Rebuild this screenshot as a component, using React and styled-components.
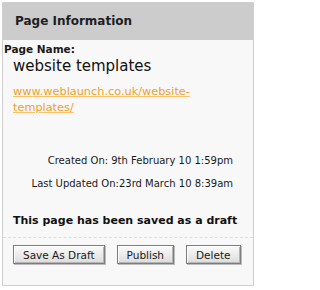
import React from 'react';
import styled, { createGlobalStyle } from 'styled-components';

/* Global */

const GlobalStyle = createGlobalStyle`
  body {
    margin: 0;
    background: #ffffff;
    font-family: "DejaVu Sans", Verdana, sans-serif;
    color: #1a1a1a;
  }
`;

/* Styled Components */

const Panel = styled.div`
  width: 250px;
  margin: 2px 0 0 2px;
  border: 1px solid #cfcfcf;
  background: #f8f8f8;
  padding-bottom: 21px;
`;

const Header = styled.h2`
  margin: 0;
  height: 37px;
  line-height: 37px;
  padding-left: 12px;
  background: #cccccc;
  font-size: 12px;
  font-weight: bold;
  color: #1e1e1e;
`;

const Label = styled.div`
  margin-top: 3px;
  padding-left: 1px;
  font-size: 10.5px;
  font-weight: bold;
  line-height: 13px;
`;

const PageName = styled.div`
  padding-left: 10px;
  font-size: 15px;
  line-height: 20px;
  color: #111;
`;

const Link = styled.a`
  display: block;
  margin: 8px 16px 0 10px;
  font-size: 11.3px;
  line-height: 16px;
  color: #f59e1b;
  text-decoration: underline;
  text-decoration-color: #f8c26a;
`;

const Meta = styled.div`
  margin-top: ${(p) => p.gap || 0}px;
  padding-right: 20px;
  text-align: right;
  font-size: 10px;
  line-height: 23px;
  color: #1a1a1a;
`;

const Status = styled.p`
  margin: 19px 0 0;
  padding-left: 10px;
  font-size: 11px;
  font-weight: bold;
  line-height: 14px;
  color: #111;
`;

const Divider = styled.hr`
  margin: 9px 0 0;
  border: 0;
  border-top: 1px dashed #dddddd;
`;

const Actions = styled.div`
  display: flex;
  gap: 12px;
  padding: 7px 0 0 10px;
`;

const Button = styled.button`
  height: 19px;
  padding: 0 9px;
  border: 1px solid #7d7d7d;
  background: linear-gradient(#fbfbfb, #dcdcdc);
  box-shadow: inset 1px 1px 0 #ffffff, inset -1px -1px 0 #b5b5b5, 1px 1px 0 #bdbdbd;
  font-family: "DejaVu Sans", Verdana, sans-serif;
  font-size: 10.5px;
  color: #1a1a1a;
  cursor: pointer;
`;

/* App */

export default function App() {
  return (
    <>
      <GlobalStyle />
      <Panel>
        <Header>Page Information</Header>
        <Label>Page Name:</Label>
        <PageName>website templates</PageName>
        <Link href="#">www.weblaunch.co.uk/website-templates/</Link>
        <Meta gap={33}>Created On: 9th February 10 1:59pm</Meta>
        <Meta>Last Updated On:23rd March 10 8:39am</Meta>
        <Status>This page has been saved as a draft</Status>
        <Divider />
        <Actions>
          <Button>Save As Draft</Button>
          <Button>Publish</Button>
          <Button>Delete</Button>
        </Actions>
      </Panel>
    </>
  );
}
